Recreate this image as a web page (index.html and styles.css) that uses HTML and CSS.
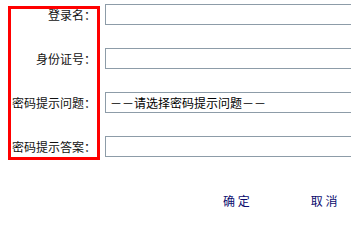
FILE: index.html
```html
<!DOCTYPE html>
<html lang="zh-CN">
<head>
<meta charset="utf-8">
<title>找回密码</title>
<link rel="stylesheet" href="styles.css">
</head>
<body>
<div class="page">
  <form class="form">
    <label class="label" for="u">登录名：</label>
    <input class="field" id="u" type="text">
    <label class="label" for="id">身份证号：</label>
    <input class="field" id="id" type="text">
    <label class="label" for="q">密码提示问题：</label>
    <select class="field select" id="q"><option>－－请选择密码提示问题－－</option></select>
    <label class="label" for="a">密码提示答案：</label>
    <input class="field" id="a" type="text">
  </form>
  <div class="actions">
    <a class="btn" href="#">确 定</a>
    <a class="btn" href="#">取 消</a>
  </div>
  <div class="highlight"></div>
</div>
</body>
</html>
```

FILE: styles.css
```css
html, body {
  margin: 0;
  padding: 0;
  background: #ffffff;
  overflow: hidden;
}
.page {
  position: relative;
  width: 351px;
  height: 215px;
  overflow: hidden;
  font-family: "Noto Sans CJK SC", "Noto Sans", sans-serif;
  font-size: 12px;
  color: #000;
}
.form {
  display: grid;
  grid-template-columns: 96px 270px;
  grid-auto-rows: 21px;
  column-gap: 9px;
  row-gap: 23px;
  padding-top: 4px;
  margin: 0;
}
.label {
  text-align: right;
  line-height: 21px;
  white-space: nowrap;
  color: #111;
}
.field {
  box-sizing: border-box;
  height: 21px;
  width: 270px;
  margin: 0;
  border: 1px solid #8d9ca8;
  background: #fff;
  font: inherit;
  padding: 0 3px;
  outline: none;
}
.select {
  appearance: none;
  -webkit-appearance: none;
  border-radius: 0;
  color: #000;
  padding-left: 4px;
  line-height: 19px;
}
.actions {
  display: flex;
  gap: 61px;
  padding-left: 223px;
  margin-top: 34px;
  line-height: 20px;
}
.btn {
  color: #0b0b6e;
  text-decoration: none;
  white-space: pre;
}
.highlight {
  position: absolute;
  left: 8px;
  top: 6px;
  width: 92px;
  height: 154px;
  box-sizing: border-box;
  border: 3px solid #f00;
  pointer-events: none;
}
```
